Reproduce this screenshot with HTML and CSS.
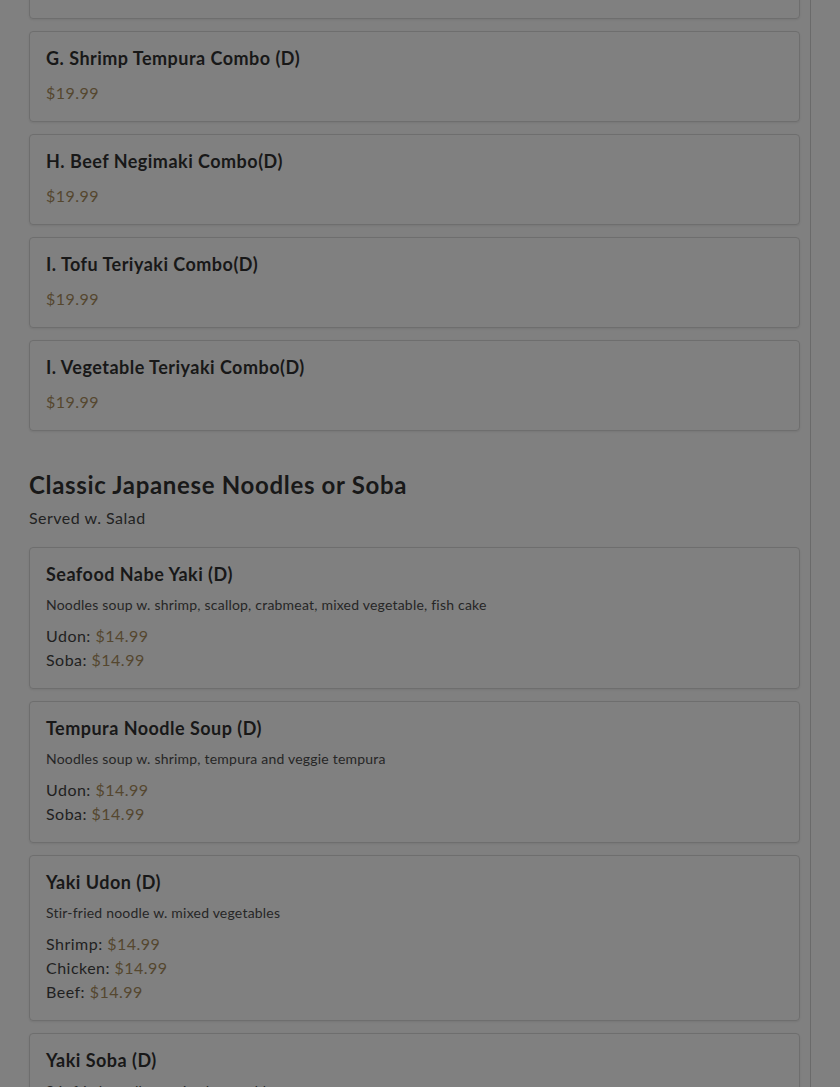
FILE: index.html
```html
<!DOCTYPE html>
<html lang="en">
<head>
<meta charset="utf-8">
<title>Menu</title>
<link rel="stylesheet" href="styles.css">
</head>
<body>
<div class="page">
  <section class="section">
    <div class="card card-cut"></div>
    <div class="card">
      <h3 class="item-title">G. Shrimp Tempura Combo (D)</h3>
      <div class="price">$19.99</div>
    </div>
    <div class="card">
      <h3 class="item-title">H. Beef Negimaki Combo(D)</h3>
      <div class="price">$19.99</div>
    </div>
    <div class="card">
      <h3 class="item-title">I. Tofu Teriyaki Combo(D)</h3>
      <div class="price">$19.99</div>
    </div>
    <div class="card">
      <h3 class="item-title">I. Vegetable Teriyaki Combo(D)</h3>
      <div class="price">$19.99</div>
    </div>
  </section>

  <section class="section section-next">
    <h2 class="section-title">Classic Japanese Noodles or Soba</h2>
    <p class="section-sub">Served w. Salad</p>

    <div class="card">
      <h3 class="item-title">Seafood Nabe Yaki (D)</h3>
      <p class="desc">Noodles soup w. shrimp, scallop, crabmeat, mixed vegetable, fish cake</p>
      <div class="opt">Udon: <span class="price-inline">$14.99</span></div>
      <div class="opt">Soba: <span class="price-inline">$14.99</span></div>
    </div>
    <div class="card">
      <h3 class="item-title">Tempura Noodle Soup (D)</h3>
      <p class="desc">Noodles soup w. shrimp, tempura and veggie tempura</p>
      <div class="opt">Udon: <span class="price-inline">$14.99</span></div>
      <div class="opt">Soba: <span class="price-inline">$14.99</span></div>
    </div>
    <div class="card">
      <h3 class="item-title">Yaki Udon (D)</h3>
      <p class="desc">Stir-fried noodle w. mixed vegetables</p>
      <div class="opt">Shrimp: <span class="price-inline">$14.99</span></div>
      <div class="opt">Chicken: <span class="price-inline">$14.99</span></div>
      <div class="opt">Beef: <span class="price-inline">$14.99</span></div>
    </div>
    <div class="card">
      <h3 class="item-title">Yaki Soba (D)</h3>
      <p class="desc">Stir-fried noodle w. mixed vegetables</p>
      <div class="opt">Shrimp: <span class="price-inline">$14.99</span></div>
      <div class="opt">Chicken: <span class="price-inline">$14.99</span></div>
      <div class="opt">Beef: <span class="price-inline">$14.99</span></div>
    </div>
  </section>
</div>
</body>
</html>
```
FILE: styles.css
```css
html, body {
  margin: 0;
  padding: 0;
  background: #808080;
  overflow: hidden;
}
body {
  font-family: "Lato", "Noto Sans", sans-serif;
  color: #1c1c1c;
  height: 1087px;
  letter-spacing: 0.03em;
}
.page {
  width: 771px;
  padding: 0 10px 0 29px;
  border-right: 1px solid #6a6a6a;
  min-height: 1087px;
  box-sizing: content-box;
}
.section {
  display: flex;
  flex-direction: column;
  gap: 12px;
}
.section-next {
  margin-top: 39px;
}
.card {
  border: 1px solid #6e6e6e;
  border-radius: 4px;
  padding: 16px;
  box-shadow: 0 1px 2px rgba(0,0,0,0.08);
}
.card-cut {
  height: 57px;
  margin-top: -72px;
}
.item-title {
  margin: 0;
  font-size: 18px;
  line-height: 21px;
  font-weight: 700;
  color: #181818;
}
.price {
  margin-top: 12px;
  font-size: 16px;
  line-height: 24px;
  color: #55472f;
}
.section-title {
  margin: 0;
  font-size: 24px;
  line-height: 29px;
  font-weight: 700;
  color: #181818;
  letter-spacing: 0.028em;
}
.section-sub {
  margin: -5px 0 5px;
  font-size: 16px;
  line-height: 24px;
  color: #222;
}
.desc {
  margin: 9px 0 9px;
  font-size: 14px;
  line-height: 21px;
  color: #262626;
  letter-spacing: 0.015em;
}
.opt {
  font-size: 16px;
  line-height: 24px;
  color: #1f1f1f;
}
.price-inline {
  color: #55472f;
}
```
